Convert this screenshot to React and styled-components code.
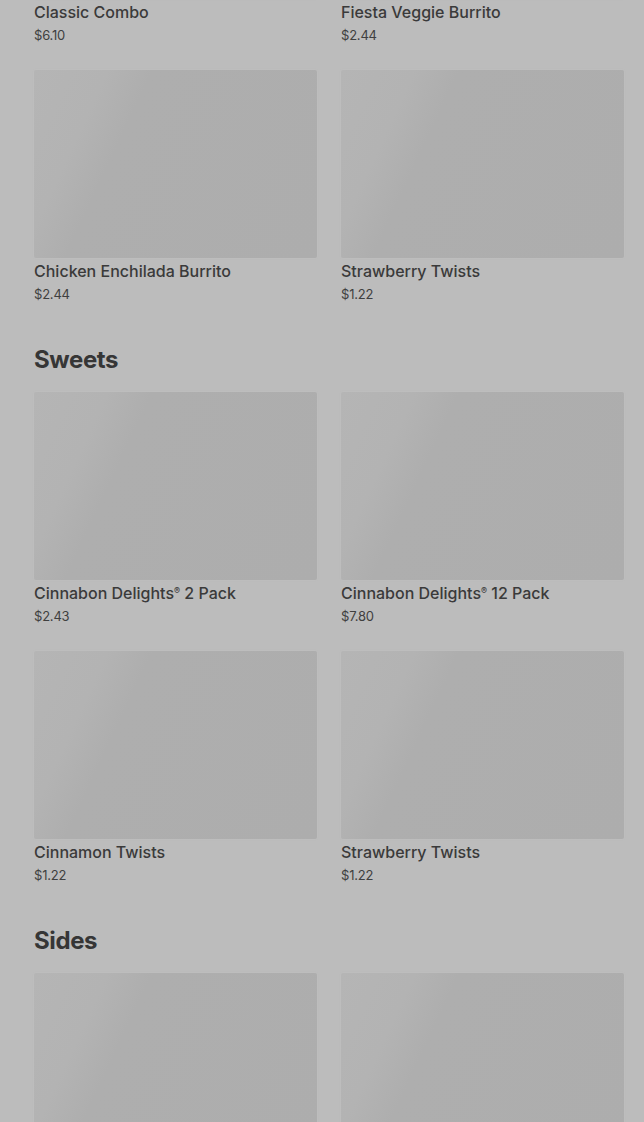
import React from 'react'
import styled, { createGlobalStyle } from 'styled-components'

const GlobalStyle = createGlobalStyle`
  html, body {
    margin: 0;
    padding: 0;
    background: #bcbcbc;
    overflow: hidden;
  }
  body {
    font-family: Inter, "Noto Sans", "Liberation Sans", sans-serif;
    color: #3a3a3a;
  }
`

const Page = styled.main`
  display: flex;
  flex-flow: column nowrap;
  gap: 41px;

  /* page is scrolled: the first row of cards sits above the fold */
  margin-top: -237px;
  padding: 0 20px 40px 34px;
`

const Section = styled.section`
  display: flex;
  flex-flow: column nowrap;
`

const SectionTitle = styled.h2`
  margin: 0 0 16px 0;
  font-size: 24px;
  line-height: 32px;
  font-weight: 700;
  letter-spacing: -0.4px;
  color: #363636;
`

const Grid = styled.div`
  display: grid;
  grid-template-columns: 1fr 1fr;
  column-gap: 24px;
  row-gap: 26px;
`

const Card = styled.div`
  display: flex;
  flex-flow: column nowrap;
  min-width: 0;
`

const Thumb = styled.div`
  height: 188px;
  border-radius: 2px;
  background: linear-gradient(115deg, #b5b5b5 0%, #b3b3b3 20%, #aeaeae 32%, #adadad 100%);
  box-shadow: 0 0 0 1px rgba(255, 255, 255, 0.06), 0 0 3px rgba(0, 0, 0, 0.05);
`

const Name = styled.div`
  margin-top: 2px;
  height: 22px;
  font-size: 16px;
  line-height: 22px;
  font-weight: 500;
  color: #3a3a3a;
  white-space: nowrap;
  overflow: hidden;
  text-overflow: ellipsis;

  sup {
    font-size: 9px;
    line-height: 0;
    vertical-align: 5px;
  }
`

const Price = styled.div`
  margin-top: 3px;
  font-size: 13px;
  line-height: 18px;
  color: #3f3f3f;
  letter-spacing: -0.2px;
`

const sections = [
  {
    title: 'Popular Items',
    items: [
      { name: 'Classic Combo', price: '$6.10' },
      { name: 'Fiesta Veggie Burrito', price: '$2.44' },
      { name: 'Chicken Enchilada Burrito', price: '$2.44' },
      { name: 'Strawberry Twists', price: '$1.22' },
    ],
  },
  {
    title: 'Sweets',
    items: [
      { name: 'Cinnabon Delights', mark: true, extra: ' 2 Pack', price: '$2.43' },
      { name: 'Cinnabon Delights', mark: true, extra: ' 12 Pack', price: '$7.80' },
      { name: 'Cinnamon Twists', price: '$1.22' },
      { name: 'Strawberry Twists', price: '$1.22' },
    ],
  },
  {
    title: 'Sides',
    items: [
      { name: 'Cheesy Fiesta Potatoes', price: '$1.83' },
      { name: 'Black Beans and Rice', price: '$1.22' },
    ],
  },
]

const MenuCard = ({ item }) => (
  <Card>
    <Thumb />
    <Name>
      {item.name}
      {item.mark && <sup>®</sup>}
      {item.extra}
    </Name>
    <Price>{item.price}</Price>
  </Card>
)

const App = () => {
  return (
    <>
      <GlobalStyle />
      <Page>
        {sections.map(section => (
          <Section key={section.title}>
            <SectionTitle>{section.title}</SectionTitle>
            <Grid>
              {section.items.map((item, index) => (
                <MenuCard key={index} item={item} />
              ))}
            </Grid>
          </Section>
        ))}
      </Page>
    </>
  )
}

export default App
